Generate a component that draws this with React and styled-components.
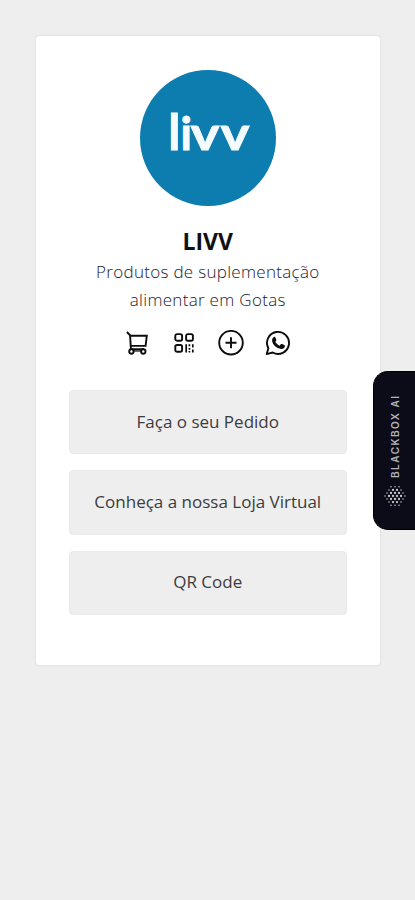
import React from 'react';
import styled, { createGlobalStyle } from 'styled-components';

const GlobalStyle = createGlobalStyle`
  * {
    box-sizing: border-box;
  }

  body {
    margin: 0;
    background: #eeeeee;
    color: #3c3c40;
    font-family: 'Open Sans', 'Noto Sans', sans-serif;
  }
`;

const Page = styled.main`
  min-height: 900px;
  padding: 36px 35px 0 35.5px;
  background: #eeeeee;
`;

const Card = styled.section`
  display: flex;
  flex-direction: column;
  align-items: center;
  width: 344.5px;
  height: 629px;
  padding: 34px 33px 0;
  border-radius: 4px;
  background: #fff;
  box-shadow: 0 0 3px rgba(0, 0, 0, 0.1);
`;

const Avatar = styled.svg`
  display: block;
  width: 136px;
  height: 136px;
  border-radius: 50%;
  background: #0d7cae;

  text {
    fill: #f5fbfd;
    stroke: #f5fbfd;
    font-family: Lato, sans-serif;
    font-weight: 700;
  }
`;

const Name = styled.h1`
  margin: 19px 0 1px;
  color: #111;
  font-size: 23px;
  font-weight: 700;
  line-height: 32px;
`;

const Description = styled.p`
  width: 250px;
  margin: 0;
  color: #222228;
  font-size: 17px;
  font-weight: 300;
  line-height: 27.5px;
  letter-spacing: 0.3px;
  text-align: center;
`;

const SocialList = styled.nav`
  display: flex;
  gap: 17px;
  height: 30px;
  margin-top: 15px;
  color: #0c0c0c;
`;

const SocialLink = styled.a`
  display: flex;
  align-items: center;
  justify-content: center;
  width: 30px;
  height: 30px;

  svg {
    flex: none;
  }
`;

const LinkList = styled.div`
  display: flex;
  flex-direction: column;
  gap: 16px;
  width: 278px;
  margin-top: 32px;
`;

const LinkButton = styled.a`
  display: flex;
  align-items: center;
  justify-content: center;
  height: 64.3px;
  padding-bottom: 2px;
  border: 1px solid #eaeaea;
  border-radius: 4px;
  background: #eeeeee;
  font-size: 17px;
`;

const SideTab = styled.aside`
  position: fixed;
  top: 371px;
  right: 0;
  display: flex;
  flex-direction: column;
  align-items: center;
  width: 42px;
  height: 159px;
  padding-top: 22px;
  border: 1px solid #000;
  border-right: 0;
  border-radius: 15px 0 0 15px;
  background: #0b0c18;
`;

SideTab.Label = styled.span`
  height: 84px;
  color: #b4b4b8;
  font-family: Inter, sans-serif;
  font-size: 10px;
  font-weight: 600;
  line-height: 14px;
  letter-spacing: 1.5px;
  white-space: nowrap;
  writing-mode: vertical-rl;
  transform: rotate(180deg);
`;

SideTab.Mark = styled.svg`
  width: 22px;
  height: 22px;
  margin-top: 7px;
  fill: #c8c8cc;
`;

const Logo = () => (
  <Avatar viewBox="0 0 136 136" role="img" aria-label="livv">
    <text y="80" strokeWidth="0.8">
      <tspan x="28.3" fontSize="49">l</tspan>
      <tspan x="40.5" fontSize="45">i</tspan>
    </text>
    <text x="50.5" y="80" fontSize="46" strokeWidth="0.8" textLength="29" lengthAdjust="spacingAndGlyphs">v</text>
    <text x="80.5" y="80" fontSize="46" strokeWidth="0.8" textLength="29" lengthAdjust="spacingAndGlyphs">v</text>
  </Avatar>
);

const CartIcon = () => (
  <svg width="24" height="24" viewBox="0 0 24 24" fill="none" stroke="currentColor" strokeWidth="1.9">
    <path d="M1.9 1 5.1 4.4 5.9 18" />
    <path d="M5.1 4.8h16.7l-1.2 10.1H5.8M5.9 18.2h13" />
    <circle cx="6.4" cy="20.5" r="2.2" fill="#fff" />
    <circle cx="18.3" cy="20.5" r="2.2" fill="#fff" />
    <path d="M8.5 20h7.7" strokeWidth="1.2" />
  </svg>
);

const QrIcon = () => (
  <svg width="20" height="20" viewBox="0 0 20 20" fill="none" stroke="currentColor" strokeWidth="1.9">
    <rect x="1.3" y="1.1" width="6.8" height="6.6" rx="1.8" />
    <rect x="12.1" y="1.1" width="6.8" height="6.6" rx="1.8" />
    <rect x="1.3" y="12" width="6.8" height="6.8" rx="1.8" />
    <path d="M12.2 11.2v8.2M15.4 11.2v2M15.4 15v1.8M15.4 18v1.4M18.8 11.2v3.4M18.8 16.4v3" strokeWidth="1.7" />
  </svg>
);

const PlusIcon = () => (
  <svg width="26" height="26" viewBox="0 0 26 26" fill="none" stroke="currentColor" strokeWidth="1.9">
    <circle cx="13" cy="12.7" r="11.8" />
    <path d="M13 7.2v11M7.5 12.7h11" />
  </svg>
);

const WhatsappIcon = () => (
  <svg width="26" height="26" viewBox="0 0 26 26" fill="none" stroke="currentColor" strokeWidth="1.9">
    <path d="M1.7 24.1 3.4 18.2A11 11 0 1 1 7.7 22.5Z" strokeLinejoin="round" />
    <path
      d="M8.8 6.9c.5-.3 1.2-.2 1.5.4l1 2.4c.2.5 0 .9-.3 1.3l-.7.8c1 1.9 2.4 3.1 4.3 3.9l1.2-1.4c.3-.4.7-.5 1.2-.3l2.3 1.1c.5.2.7.6.6 1.1-.3 2-1.9 2.9-3.8 2.7-4.8-.6-8.7-4.3-9-8.4-.1-1.5.6-2.9 1.7-3.6Z"
      fill="currentColor"
      stroke="none"
    />
  </svg>
);

const dotRows = [
  { y: 1.8, xs: [7, 11, 15] },
  { y: 4.9, xs: [5, 9, 13, 17] },
  { y: 8, xs: [3, 7, 11, 15, 19] },
  { y: 11, xs: [1, 5, 9, 13, 17, 21] },
  { y: 14, xs: [3, 7, 11, 15, 19] },
  { y: 17.1, xs: [5, 9, 13, 17] },
  { y: 20.2, xs: [7, 11, 15] },
];

const socials = [
  { name: 'Loja', icon: <CartIcon /> },
  { name: 'QR Code', icon: <QrIcon /> },
  { name: 'Mais', icon: <PlusIcon /> },
  { name: 'WhatsApp', icon: <WhatsappIcon /> },
];

const links = ['Faça o seu Pedido', 'Conheça a nossa Loja Virtual', 'QR Code'];

const App = () => (
  <Page>
    <GlobalStyle />
    <Card>
      <Logo />
      <Name>LIVV</Name>
      <Description>Produtos de suplementação alimentar em Gotas</Description>
      <SocialList>
        {socials.map(({ name, icon }) => (
          <SocialLink key={name} aria-label={name}>{icon}</SocialLink>
        ))}
      </SocialList>
      <LinkList>
        {links.map((link) => (
          <LinkButton key={link}>{link}</LinkButton>
        ))}
      </LinkList>
    </Card>
    <SideTab>
      <SideTab.Label>BLACKBOX AI</SideTab.Label>
      <SideTab.Mark viewBox="0 0 22 22">
        {dotRows.map(({ y, xs }) => xs.map((x) => (
          <circle
            key={`${x}-${y}`}
            cx={x}
            cy={y}
            r={Math.hypot(x - 11, y - 11) < 7 ? 1.15 : 0.75}
          />
        )))}
      </SideTab.Mark>
    </SideTab>
  </Page>
);

export default App;
